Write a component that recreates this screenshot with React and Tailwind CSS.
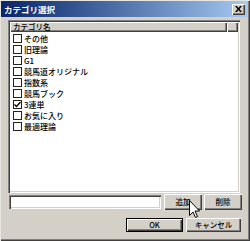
export default function App() {
  const items = [
    ["その他", false],
    ["旧理論", false],
    ["G1", false],
    ["競馬道オリジナル", false],
    ["指数系", false],
    ["競馬ブック", false],
    ["3連単", true],
    ["お気に入り", false],
    ["最適理論", false],
  ];
  const raised =
    "bg-[#d4d0c8] shadow-[inset_1px_1px_0_#ffffff,inset_-1px_-1px_0_#404040,inset_-2px_-2px_0_#808080]";
  const sunken =
    "bg-white shadow-[inset_1px_1px_0_#808080,inset_2px_2px_0_#404040,inset_-1px_-1px_0_#ffffff,inset_-2px_-2px_0_#d4d0c8]";
  return (
    <div className="relative w-[250px] h-[241px] bg-[#d4d0c8] overflow-hidden font-['Noto_Sans_CJK_JP','Liberation_Sans',sans-serif] leading-none text-black shadow-[inset_1px_1px_0_#e8e6e0,inset_-1px_-1px_0_#404040,inset_-2px_-2px_0_#808080]">
      {/* Title bar */}
      <div className="mx-[1px] mt-[1px] h-[16px] w-[247px] flex items-center justify-between bg-gradient-to-r from-[#0a246a] to-[#a6caf0] pl-[3px] pr-[3px]">
        <span className="text-white font-bold text-[8.5px] leading-none">カテゴリ選択</span>
        <div className={`${raised} w-[13px] h-[11px] flex items-center justify-center`}>
          <svg width="7" height="6" viewBox="0 0 7 6">
            <path d="M0 0h2l1.5 2L5 0h2L4.5 3 7 6H5L3.5 4 2 6H0l2.5-3z" fill="#000" />
          </svg>
        </div>
      </div>

      <div className="flex flex-col pl-[8px] pr-[8px]">
        {/* List view */}
        <div className="mt-[3px] h-[173px] w-[232px] bg-white p-[2px] shadow-[inset_1px_1px_0_#808080,inset_2px_2px_0_#404040,inset_-1px_-1px_0_#ffffff,inset_-2px_-2px_0_#d4d0c8] flex flex-col">
          <div className="flex h-[10px]">
            <div className={`${raised} w-[217px] h-[10px] flex items-center pl-[3px] text-[7.5px] font-medium leading-none`}>
              カテゴリ名
            </div>
            <div className={`${raised} flex-1 h-[10px]`} />
          </div>
          <div className="flex flex-col pt-[1px]">
            {items.map(([label, checked]) => (
              <div key={label} className="h-[11px] flex items-center pl-[3px] gap-[2px]">
                <div className="w-[9px] h-[9px] border border-[#222] bg-white flex items-center justify-center shrink-0">
                  {checked && (
                    <svg width="7" height="7" viewBox="0 0 7 7">
                      <path d="M0.5 3.5L2.5 5.5L6.5 1" stroke="#000" strokeWidth="1.4" fill="none" />
                    </svg>
                  )}
                </div>
                <span className="text-[8px] font-medium leading-none whitespace-nowrap">{label}</span>
              </div>
            ))}
          </div>
        </div>

        {/* Input row */}
        <div className="mt-[1px] flex items-center">
          <div className={`${sunken} w-[152px] h-[14px] ml-[1px]`} />
          <div className={`${raised} ml-[3px] w-[38px] h-[16px] flex items-center justify-center text-[7.5px] font-medium leading-none`}>追加</div>
          <div className={`${raised} ml-[2px] w-[38px] h-[16px] flex items-center justify-center text-[7.5px] font-medium leading-none`}>削除</div>
        </div>

        {/* OK / Cancel */}
        <div className="mt-[8px] flex justify-end pr-[1px]">
          <div className="border border-black w-[57px] h-[14px]">
            <div className={`${raised} w-full h-full flex items-center justify-center text-[7.5px] font-medium leading-none`}>OK</div>
          </div>
          <div className={`${raised} ml-[3px] w-[55px] h-[14px] flex items-center justify-center text-[7.5px] font-medium leading-none`}>キャンセル</div>
        </div>
      </div>

      {/* Mouse cursor */}
      <svg className="absolute left-[189px] top-[200px]" width="12" height="19" viewBox="0 0 12 19">
        <path d="M0.5 0.5V15.5L4 12L6.5 17.5L8.5 16.5L6 11H10.5Z" fill="#fff" stroke="#000" strokeWidth="1" />
      </svg>
    </div>
  );
}
